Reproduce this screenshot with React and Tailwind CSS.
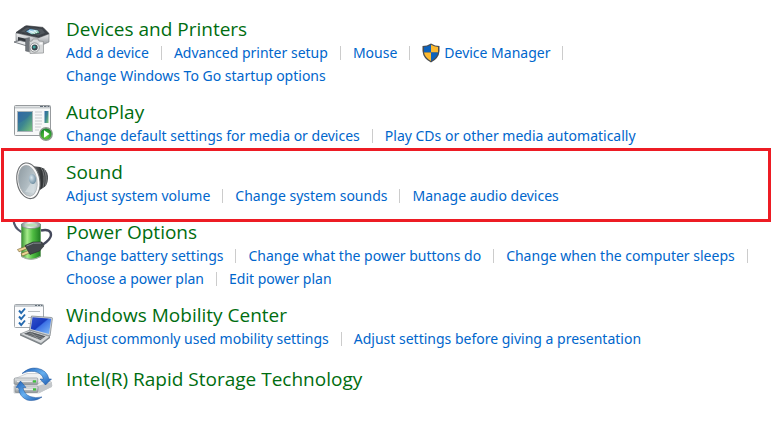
const iconClass = "w-10 h-10 shrink-0 overflow-visible";

function PrinterIcon() {
  return (
    <svg viewBox="0 0 40 40" className={iconClass} aria-hidden="true">
      <defs>
        <linearGradient id="printerFront" x1="0" y1="0" x2="0" y2="1">
          <stop offset="0" stopColor="#f2f3f4" />
          <stop offset="1" stopColor="#8d9196" />
        </linearGradient>
        <linearGradient id="printerScreen" x1="0" y1="0" x2="1" y2="1">
          <stop offset="0" stopColor="#2e7fc4" />
          <stop offset="0.5" stopColor="#bfe6ef" />
          <stop offset="1" stopColor="#3f9a5a" />
        </linearGradient>
      </defs>
      <path d="M3 14 L25 19 L36 15 L36 23 L27 27 L3 22 Z" fill="url(#printerFront)" stroke="#777c82" strokeWidth="0.6" />
      <path d="M3 13.5 L12 7.2 Q13 6.6 14 6.8 L30 8.4 L36 14.5 L25.5 18.5 Z" fill="#3d4248" stroke="#25292d" strokeWidth="0.6" />
      <path d="M8 12.5 L14 8.5 L29 10 L32 14 L25 16.5 Z" fill="#51575d" />
      <path d="M12.5 12.5 L17 9.5 L25 11 L27 14 L19 15.8 Z" fill="url(#printerScreen)" stroke="#1c2a36" strokeWidth="0.6" />
      <path d="M16 11.5 L22 14.5 M21 11.5 L24 14" stroke="#fff" strokeWidth="0.8" />
      <path d="M5 18 L14 20 L14 24 L5 22 Z" fill="#33383d" />
      <path d="M1 23 L7 21.5 L16 23.5 L14 27 Z" fill="#e6e8ea" stroke="#5c6167" strokeWidth="0.8" />
      <path d="M12.5 19.5 L16.5 18.5 L16.5 33 L12.5 32 Z" fill="#70757b" stroke="#555a5f" strokeWidth="0.4" />
      <path d="M16.5 22.5 L19 22 L20 20 L25 20 L26 22 L30.5 22.5 L30.5 34 L17 34.5 Z" fill="#d7d9da" stroke="#8c8f91" strokeWidth="0.7" />
      <circle cx="21.7" cy="28.5" r="4.6" fill="#f5f5f5" stroke="#777b7e" strokeWidth="0.7" />
      <circle cx="21.7" cy="28.5" r="3" fill="#3a464d" />
      <circle cx="21.2" cy="28" r="1.5" fill="#3da39b" />
      <rect x="26.5" y="23.5" width="3" height="2" fill="#fafafa" />
    </svg>
  );
}

function AutoPlayIcon() {
  return (
    <svg viewBox="0 0 40 40" className={iconClass} aria-hidden="true">
      <defs>
        <linearGradient id="playPicture" x1="0" y1="0" x2="1" y2="1">
          <stop offset="0" stopColor="#2f69a8" />
          <stop offset="0.5" stopColor="#3c8590" />
          <stop offset="1" stopColor="#7fc878" />
        </linearGradient>
        <radialGradient id="playButton" cx="0.5" cy="0.7" r="0.6">
          <stop offset="0" stopColor="#69d23c" />
          <stop offset="1" stopColor="#16882b" />
        </radialGradient>
      </defs>
      <rect x="1.5" y="3.5" width="36" height="30" rx="1" fill="#f7f8f8" stroke="#979b9e" />
      <path d="M2 5.5 H37" stroke="#c7cbce" strokeWidth="2" />
      <path d="M27 4.5 H30 M31 4.5 H33.5 M34.5 4.5 H36.5" stroke="#626d78" />
      <rect x="4.5" y="9.5" width="15" height="20" fill="url(#playPicture)" stroke="#a8b3b8" />
      <path d="M5 21 Q13 19 19 10 L5 10 Z" fill="#3067a0" opacity="0.45" />
      <path d="M22 10 H29 M22 13 H29 M22 16 H29 M22 19 H29 M22 22 H29 M22 25 H28 M22 28 H26" stroke="#c9cccf" strokeWidth="1" />
      <rect x="31.5" y="9" width="4" height="12" fill="url(#playPicture)" />
      <circle cx="33" cy="32" r="6.2" fill="url(#playButton)" stroke="#8f9a91" strokeWidth="1.4" />
      <path d="M31 28.3 L36.5 32 L31 35.7 Z" fill="#fff" />
    </svg>
  );
}

function SpeakerIcon() {
  return (
    <svg viewBox="0 0 40 40" className={iconClass} aria-hidden="true">
      <defs>
        <linearGradient id="coneFill" x1="0" y1="0" x2="1" y2="1">
          <stop offset="0" stopColor="#8b979e" />
          <stop offset="0.5" stopColor="#aebac0" />
          <stop offset="1" stopColor="#e0e6e9" />
        </linearGradient>
        <linearGradient id="magnetFill" x1="0" y1="0" x2="1" y2="0">
          <stop offset="0" stopColor="#6f7274" />
          <stop offset="0.6" stopColor="#303335" />
          <stop offset="1" stopColor="#55585b" />
        </linearGradient>
        <radialGradient id="capFill" cx="0.4" cy="0.35" r="0.65">
          <stop offset="0" stopColor="#d9e6ee" />
          <stop offset="1" stopColor="#7291a4" />
        </radialGradient>
      </defs>
      <path d="M19 4 L27 5 Q34 7 35 14 Q35.5 21 32 24.5 L24 30 Z" fill="url(#magnetFill)" />
      <path d="M28 5.5 Q33 13 30 26 M31 7.5 Q34.5 14 32.5 23.5" fill="none" stroke="#8c8f91" strokeWidth="0.7" />
      <ellipse cx="15.4" cy="18.8" rx="11.4" ry="18" transform="rotate(-10 15.4 18.8)" fill="#fafafa" stroke="#6c6f71" strokeWidth="1.1" />
      <ellipse cx="14.8" cy="18.8" rx="9.2" ry="15.6" transform="rotate(-10 14.8 18.8)" fill="url(#coneFill)" stroke="#a0a5a8" strokeWidth="0.6" />
      <path d="M18 21 L22 22 L21 31 L12 30 Z" fill="#dbe2e6" opacity="0.6" />
      <ellipse cx="19.5" cy="17" rx="3.6" ry="5" transform="rotate(-10 19.5 17)" fill="url(#capFill)" />
    </svg>
  );
}

function BatteryIcon() {
  return (
    <svg viewBox="0 0 40 40" className={iconClass} aria-hidden="true">
      <defs>
        <linearGradient id="batteryFill" x1="0" y1="0" x2="1" y2="0">
          <stop offset="0" stopColor="#36912f" />
          <stop offset="0.3" stopColor="#a6eb8b" />
          <stop offset="0.6" stopColor="#4fbd42" />
          <stop offset="1" stopColor="#1f7d22" />
        </linearGradient>
        <linearGradient id="batteryCap" x1="0" y1="0" x2="1" y2="0">
          <stop offset="0" stopColor="#80868a" />
          <stop offset="0.4" stopColor="#f6f8f8" />
          <stop offset="1" stopColor="#8d9599" />
        </linearGradient>
      </defs>
      <path d="M0.5 -2 Q1 6 8.5 10" fill="none" stroke="#53586c" strokeWidth="2.2" />
      <path d="M8.5 2 V34.5 Q18 40 27.5 34.5 V2 Z" fill="url(#batteryFill)" stroke="#4f8b4a" strokeWidth="0.5" />
      <path d="M8.5 34.5 Q18 40 27.5 34.5" fill="none" stroke="#a8b3a8" strokeWidth="1.2" />
      <ellipse cx="18" cy="3" rx="9.6" ry="3.6" fill="url(#batteryCap)" stroke="#7c8487" strokeWidth="0.6" />
      <ellipse cx="18" cy="3.2" rx="6.2" ry="1.6" fill="#b9dcb4" />
      <path d="M28 8.5 Q38 6.5 38 13 Q38 17 30 22.5" fill="none" stroke="#45495c" strokeWidth="2.4" />
      <path d="M4.5 27.5 L13 24.2 L14.5 26.5 L6 29.8 Z" fill="#ecd596" stroke="#745d31" strokeWidth="0.6" />
      <path d="M8 31.5 L15.5 28.5 L17 30.8 L9.5 34 Z" fill="#ecd596" stroke="#745d31" strokeWidth="0.6" />
      <path d="M12 23.5 L20 20 L29 20 L31 24 L26.5 29 L17 32.5 Z" fill="#42474b" stroke="#26292c" strokeWidth="0.6" />
      <path d="M13.5 24 L20.5 21.2 L28 21" fill="none" stroke="#878e92" strokeWidth="1" />
    </svg>
  );
}

function MobilityIcon() {
  return (
    <svg viewBox="0 0 40 40" className={iconClass} aria-hidden="true">
      <defs>
        <linearGradient id="laptopScreen" x1="0" y1="0" x2="1" y2="1">
          <stop offset="0" stopColor="#3552cb" />
          <stop offset="0.45" stopColor="#1739be" />
          <stop offset="0.5" stopColor="#3e73e5" />
          <stop offset="1" stopColor="#80bdf8" />
        </linearGradient>
      </defs>
      <rect x="1.5" y="-0.5" width="29" height="23" rx="1" fill="#fcfcfd" stroke="#a2a8ad" />
      <path d="M2 1 H30" stroke="#cbd0d4" strokeWidth="2" />
      <path d="M22 0.5 H24 M25 0.5 H27 M28 0.5 H29.5" stroke="#64707a" />
      <path d="M6 5.5 L8.2 8 L12 3.5 M6 11.5 L8.2 14 L12 9.5 M6 17.5 L8.2 20 L12 15.5" fill="none" stroke="#2469ae" strokeWidth="1.9" />
      <path d="M15 6.5 H27 M15 12.5 H22 M15 18.5 H20" stroke="#babec2" />
      <path d="M7 29 L17 25 L37 31.5 L28 38.5 Z" fill="#d5d8da" stroke="#7f8589" strokeWidth="0.7" />
      <path d="M7 29 L28 38.5 L37 31.5 V33 L28 40 L7 30.5 Z" fill="#7c8286" />
      <path d="M11 28.7 L17 26.5 L32.5 31.2 L27.5 35 Z" fill="#54595e" />
      <path d="M13 29 L29 34 M15.5 28 L30.5 32.7 M17 26.5 L25 34" stroke="#a8adaf" strokeWidth="0.5" />
      <path d="M18.5 11 L38.5 12.5 Q39.5 12.6 39.4 13.6 L37 31 L16.5 25 Z" fill="#d0d4d7" stroke="#777e84" strokeWidth="0.7" />
      <path d="M19.5 12.3 L38.2 13.8 L36 29 L17.8 24.1 Z" fill="url(#laptopScreen)" />
    </svg>
  );
}

function StorageIcon() {
  return (
    <svg viewBox="0 0 40 40" className={iconClass} aria-hidden="true">
      <defs>
        <linearGradient id="driveFill" x1="0" y1="0" x2="0" y2="1">
          <stop offset="0" stopColor="#e9ebec" />
          <stop offset="1" stopColor="#909699" />
        </linearGradient>
        <linearGradient id="arrowFill" x1="0" y1="0" x2="1" y2="1">
          <stop offset="0" stopColor="#1c5eb6" />
          <stop offset="0.5" stopColor="#67b0f0" />
          <stop offset="1" stopColor="#1957af" />
        </linearGradient>
      </defs>
      <path d="M1 17 L14 12.5 H38 L39 17 L26 24 H1 Z" fill="#eceeef" stroke="#b6babd" strokeWidth="0.6" />
      <path d="M24 17 L39 13 V18 L26 24 Z" fill="#c3c7ca" />
      <rect x="2" y="17" width="23" height="6.5" rx="1" fill="url(#driveFill)" stroke="#7e8589" strokeWidth="0.6" />
      <path d="M1 10 L14 4.5 H31 L34 8 L25 15 H1 Z" fill="#f0f1f2" stroke="#b6babd" strokeWidth="0.6" />
      <rect x="1.3" y="9" width="23.5" height="6.5" rx="1" fill="url(#driveFill)" stroke="#7e8589" strokeWidth="0.6" />
      <path d="M4 12.3 H19 M5 20.3 H20" stroke="#f6f7f7" />
      <rect x="20" y="11.3" width="3" height="2.2" fill="#3ec43d" />
      <rect x="20" y="19.3" width="3" height="2.2" fill="#3ec43d" />
      <path d="M9 4.5 Q16 -2 24 -0.8 Q34 1 36 10 L38.5 10 L32.5 16 L27 10 L30.5 10 Q29 4 21.5 2.5 Q15 1.5 9 4.5 Z" fill="url(#arrowFill)" stroke="#1c5299" strokeWidth="0.5" />
      <path d="M29 28 Q22 33 14 31 Q6 27.5 5.5 18.5 L3 18.5 L7.5 12 L13 18.5 L10 18.5 Q11 25 17 27.5 Q22 29.5 29 28 Z" fill="url(#arrowFill)" stroke="#1c5299" strokeWidth="0.5" />
    </svg>
  );
}

function ShieldIcon() {
  return (
    <svg viewBox="0 0 18 20" className="w-[18px] h-5 mr-1 shrink-0" aria-hidden="true">
      <path d="M9 0.5 Q5 3 0.5 3 V8 Q1 15.5 9 19.5 Q17 15.5 17.5 8 V3 Q13 3 9 0.5 Z" fill="#4a4d50" />
      <path d="M9 1.8 Q6 3.8 2 4.1 V9.5 H9 Z" fill="#0c62bd" />
      <path d="M9 1.8 Q12 3.8 16 4.1 V9.5 H9 Z" fill="#fdb92e" />
      <path d="M2 9.5 H9 V18 Q3 14.8 2 9.5 Z" fill="#fdb92e" />
      <path d="M16 9.5 H9 V18 Q15 14.8 16 9.5 Z" fill="#0c62bd" />
    </svg>
  );
}

const categories = [
  {
    title: "Devices and Printers",
    Icon: PrinterIcon,
    links: [
      "Add a device",
      "Advanced printer setup",
      "Mouse",
      "Device Manager",
      "Change Windows To Go startup options",
    ],
  },
  {
    title: "AutoPlay",
    Icon: AutoPlayIcon,
    links: ["Change default settings for media or devices", "Play CDs or other media automatically"],
  },
  {
    title: "Sound",
    Icon: SpeakerIcon,
    links: ["Adjust system volume", "Change system sounds", "Manage audio devices"],
    highlighted: true,
  },
  {
    title: "Power Options",
    Icon: BatteryIcon,
    links: [
      "Change battery settings",
      "Change what the power buttons do",
      "Change when the computer sleeps",
      "Choose a power plan",
      "Edit power plan",
    ],
  },
  {
    title: "Windows Mobility Center",
    Icon: MobilityIcon,
    links: ["Adjust commonly used mobility settings", "Adjust settings before giving a presentation"],
  },
  { title: "Intel(R) Rapid Storage Technology", Icon: StorageIcon, links: [] },
];

function Category({ title, Icon, links, highlighted }) {
  return (
    <section className="relative flex gap-[13px] pl-[13px] last:mt-1">
      <div className="pt-0.5">
        <Icon />
      </div>
      <div className="min-w-0 flex-1">
        <h2 className="text-[19px] leading-6 text-[#006d10] font-['Open_Sans',sans-serif]">
          <a href="#" className="hover:underline">{title}</a>
        </h2>
        <ul className="flex flex-wrap text-[14px] leading-[23px] text-[#0066cc]">
          {links.map((link, i) => (
            <li key={link} className="flex items-center whitespace-nowrap">
              {link === "Device Manager" && <ShieldIcon />}
              <a href="#" className="hover:underline">{link}</a>
              {i < links.length - 1 && <span className="mx-3 h-3.5 w-px bg-[#cccccc]" />}
            </li>
          ))}
        </ul>
      </div>
      {highlighted && (
        <div className="pointer-events-none absolute z-10 -top-3 -bottom-[15px] left-px right-px border-3 border-[#ed1c24]" />
      )}
    </section>
  );
}

export default function App() {
  return (
    <main className="min-h-screen bg-white pt-[17px] pb-4 flex flex-col gap-[13px] font-['Noto_Sans',sans-serif]">
      {categories.map((category) => (
        <Category key={category.title} {...category} />
      ))}
    </main>
  );
}
